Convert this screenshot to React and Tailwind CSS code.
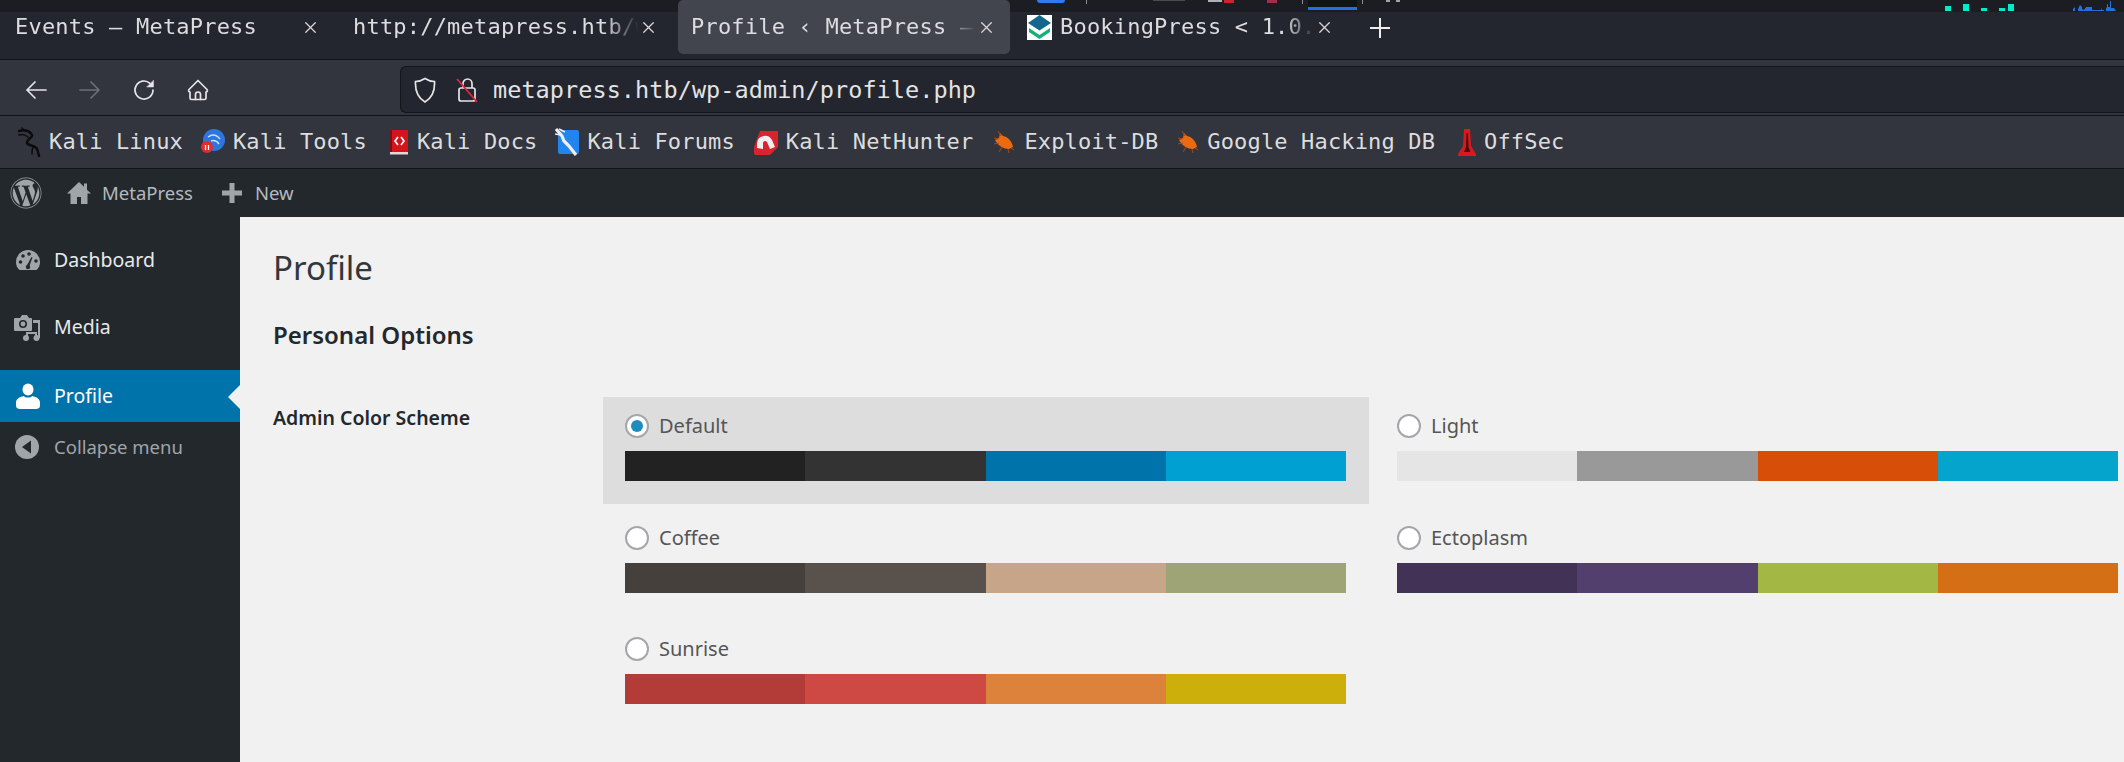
import React from "react";
import { X } from "lucide-react";
import { FaWordpress } from "react-icons/fa";

const mono = "font-['DejaVu_Sans_Mono',monospace]";
const sans = "font-['Noto_Sans',sans-serif]";

function TopStrip() {
  return (
    <svg className="absolute left-0 top-0" width="2124" height="12" viewBox="0 0 2124 12">
      <rect width="2124" height="12" fill="#1b1d23" />
      <rect x="1037" y="-3" width="28" height="6" rx="3" fill="#2f7bf0" />
      <rect x="1086" y="0" width="1" height="4" fill="#8a8c90" />
      <rect x="1153" y="0" width="32" height="1" fill="#4a4c50" />
      <rect x="1208" y="0" width="14" height="2" fill="#b0b0b4" />
      <rect x="1224" y="0" width="10" height="3" fill="#d02028" />
      <rect x="1267" y="0" width="10" height="3" fill="#a0304c" />
      <rect x="1302" y="0" width="1" height="4" fill="#8a8c90" />
      <rect x="1308" y="0" width="49" height="7" fill="#121317" />
      <rect x="1308" y="7" width="49" height="3" fill="#2470e0" />
      <rect x="1362" y="0" width="1" height="4" fill="#8a8c90" />
      <rect x="1386" y="0" width="4" height="2" fill="#a0a2a6" />
      <rect x="1396" y="0" width="4" height="2" fill="#a0a2a6" />
      <g fill="#06e8d0">
        <rect x="1945" y="6" width="6" height="5" />
        <rect x="1963" y="4" width="6" height="7" />
        <rect x="1981" y="8" width="6" height="3" />
        <rect x="1999" y="8" width="6" height="3" />
        <rect x="2008" y="4" width="6" height="7" />
      </g>
      <path d="M2073 11v-2l2-2v4h3V9l2-4 2 2v2l2 1 2-3h6v3h9v-2l1 2h2v1h2V8l1-1v-3h1v3h2V1h1v7h3l2 3z" fill="#2470e0" />
    </svg>
  );
}

function Tab({ active, icon, children }) {
  return (
    <div className={`flex h-[54px] w-[332px] shrink-0 items-center rounded-[5px] pr-[14px] ${icon ? "pl-[11px]" : "pl-[13px]"} ${active ? "bg-[#42454d]" : ""}`}>
      {icon}
      <span className={`min-w-0 flex-1 overflow-hidden whitespace-nowrap ${mono} text-[22px] leading-[28px] tracking-[0.2px] text-[#dcdddf] [mask-image:linear-gradient(to_right,#000_88%,transparent_100%)]`}>
        {children}
      </span>
      <X size={19} strokeWidth={1.5} className="shrink-0 text-[#d8d9db]" />
    </div>
  );
}

function BookingIcon() {
  return (
    <svg width="25" height="25" viewBox="0 0 25 25" className="mr-[8px] shrink-0">
      <rect width="25" height="25" fill="#fff" />
      <path d="M12.5 0L24 8 12.5 15.5 1 8z" fill="#14668c" />
      <path d="M2 13l10.5 7 10.5-7v4L12.5 24 2 17z" fill="#14b07c" />
    </svg>
  );
}

function NavIcon({ children, dim }) {
  return (
    <svg width="24" height="24" viewBox="0 0 24 24" fill="none" stroke={dim ? "#6d6f75" : "#e4e5e7"} strokeWidth="1.7" strokeLinecap="round" strokeLinejoin="round" className="shrink-0">
      {children}
    </svg>
  );
}

function KaliIcon() {
  return (
    <svg width="24" height="30" viewBox="0 0 24 30" fill="none" stroke="#0b0b0d" strokeWidth="2.4" strokeLinecap="round" className="shrink-0">
      <path d="M1 4c6-2 11 0 13 4 1 3-6 4-5 8 1 3 8 2 10 6 1 2 1 4 2 7" />
      <path d="M4 1l3 3M1 8c3-1 7 0 9 2M15 20c-1 2-1 4-1 7" strokeWidth="1.500" />
    </svg>
  );
}
function ToolsIcon() {
  return (
    <svg width="24" height="26" viewBox="0 0 24 26" className="shrink-0">
      <circle cx="13" cy="11" r="11" fill="#2c76de" />
      <path d="M7 8c4-3 8-3 12 2M10 12c3-1 6 0 8 3" stroke="#cfe2fb" strokeWidth="1.4" fill="none" />
      <circle cx="6" cy="18" r="6" fill="#e22b2b" />
      <path d="M4.5 16v5M7.5 16v5" stroke="#fff" strokeWidth="1.3" />
    </svg>
  );
}
function DocsIcon() {
  return (
    <svg width="19" height="26" viewBox="0 0 19 26" className="shrink-0">
      <rect x="0" y="1" width="18" height="22" fill="#d3141b" />
      <rect x="0" y="1" width="2" height="22" fill="#7e0d14" />
      <rect x="0" y="23" width="18" height="2.5" fill="#e9d6d6" />
      <path d="M8 8l-3 4 3 4M11 8l3 4-3 4" stroke="#fff" strokeWidth="1.7" fill="none" />
    </svg>
  );
}
function ForumsIcon() {
  return (
    <svg width="24" height="28" viewBox="0 0 24 28" className="shrink-0">
      <path d="M6 2h16a2 2 0 0 1 2 2v20a2 2 0 0 1-2 2H5a2 2 0 0 1-2-2V8z" fill="#2384ee" />
      <path d="M1 1l6 7 2 5 5 5 7 9" stroke="#eeeff2" strokeWidth="3.200" fill="none" />
      <path d="M4 1l6 3M0 6l6 1" stroke="#eeeff2" strokeWidth="1.600" />
    </svg>
  );
}
function HunterIcon() {
  return (
    <svg width="24" height="26" viewBox="0 0 24 26" className="shrink-0">
      <path d="M6 2h18v16L16 26H2a2 2 0 0 1-2-2v-6z" fill="#d8242e" />
      <path d="M3 19V14a8 8 0 0 1 15-3l3 7-5 2-3-7c-1-2-4-1-4 1v6z" fill="#f0eeee" />
    </svg>
  );
}
function BugIcon() {
  return (
    <svg width="23" height="24" viewBox="0 0 23 24" className="shrink-0">
      <path d="M7 3l3 3c5 1 9 5 10 11l-4 2c-5 0-11-3-14-9l4-2z" fill="#ec6a10" />
      <path d="M5 1l3 5M1 8l4 1M1 14l5-1M6 22l3-5M16 23l-1-4M21 20l-3-2" stroke="#a8480f" strokeWidth="1" />
    </svg>
  );
}
function OffSecIcon() {
  return (
    <svg width="20" height="28" viewBox="0 0 20 28" className="shrink-0">
      <path d="M7 1h6l1 17 5 8v2H1v-2l5-8z" fill="#d81a20" />
      <path d="M9.5 5h1.5l.5 14 2 5H7l2-5z" fill="#4a0a0c" />
    </svg>
  );
}

const bookmarks = [
  ["Kali Linux", <KaliIcon />, "mr-[7px]", "mr-[18px]"],
  ["Kali Tools", <ToolsIcon />, "mr-[8px]", "mr-[23px]"],
  ["Kali Docs", <DocsIcon />, "mr-[8px]", "mr-[18px]"],
  ["Kali Forums", <ForumsIcon />, "mr-[8px]", "mr-[19px]"],
  ["Kali NetHunter", <HunterIcon />, "mr-[8px]", "mr-[20px]"],
  ["Exploit-DB", <BugIcon />, "mr-[8px]", "mr-[19px]"],
  ["Google Hacking DB", <BugIcon />, "mr-[7px]", "mr-[22px]"],
  ["OffSec", <OffSecIcon />, "mr-[7px]", ""],
];

function DashIcon() {
  return (
    <svg width="26" height="24" viewBox="0 0 26 24" className="shrink-0">
      <path d="M4.5 22C2 20 1 17 1 14a12 12 0 0 1 24 0c0 3-1 6-3.500 8z" fill="#a0a5aa" />
      <g fill="#23282d">
        <circle cx="5.500" cy="14" r="1.800" />
        <circle cx="8" cy="8" r="1.800" />
        <circle cx="14" cy="6" r="1.800" />
        <circle cx="21" cy="13" r="1.800" />
        <path d="M11.500 18l5-9 1 .5-3.500 9.500z" />
        <circle cx="13" cy="19" r="2.200" />
      </g>
    </svg>
  );
}
function MediaIcon() {
  return (
    <svg width="28" height="28" viewBox="0 0 28 28" className="shrink-0">
      <path d="M2 5h5l2-3h5l2 3h2a1 1 0 0 1 1 1v11a1 1 0 0 1-1 1H2a1 1 0 0 1-1-1V6a1 1 0 0 1 1-1z" fill="#a0a5aa" />
      <circle cx="10" cy="11" r="4" fill="#23282d" />
      <circle cx="10" cy="11" r="2.400" fill="#a0a5aa" />
      <path d="M20 7h7v18h-2V10h-5z" fill="#a0a5aa" />
      <circle cx="13" cy="25" r="3" fill="#a0a5aa" />
      <circle cx="23.500" cy="25" r="3" fill="#a0a5aa" />
      <path d="M14 25v-5h9v5" fill="none" stroke="#a0a5aa" strokeWidth="2" />
    </svg>
  );
}
function UserIcon() {
  return (
    <svg width="24" height="26" viewBox="0 0 24 26" className="shrink-0">
      <ellipse cx="12" cy="6.500" rx="5.500" ry="6" fill="#fff" />
      <path d="M0 20c0-4 3-6 8-7 1 2 7 2 8 0 5 1 8 3 8 7v3c0 2-2 3-4 3H4c-2 0-4-1-4-3z" fill="#fff" />
    </svg>
  );
}
function CollapseIcon() {
  return (
    <svg width="24" height="24" viewBox="0 0 24 24" className="shrink-0">
      <circle cx="12" cy="12" r="12" fill="#a0a5aa" />
      <path d="M7 12l9-6.500v13z" fill="#23282d" />
    </svg>
  );
}

function Radio({ checked }) {
  return (
    <span className="flex h-[24px] w-[24px] shrink-0 items-center justify-center rounded-full border-[2px] border-[#a3a7ab] bg-white">
      {checked && <span className="h-[12px] w-[12px] rounded-full bg-[#1e8cbe]" />}
    </span>
  );
}

const schemes = [
  ["Default", ["bg-[#222222]", "bg-[#333333]", "bg-[#0073aa]", "bg-[#00a0d2]"], true],
  ["Light", ["bg-[#e5e5e5]", "bg-[#999999]", "bg-[#d64e07]", "bg-[#04a4cc]"]],
  ["Coffee", ["bg-[#46403c]", "bg-[#59524c]", "bg-[#c7a589]", "bg-[#9ea476]"]],
  ["Ectoplasm", ["bg-[#413256]", "bg-[#523f6d]", "bg-[#a3b745]", "bg-[#d46f15]"]],
  ["Sunrise", ["bg-[#b43c38]", "bg-[#cf4944]", "bg-[#dd823b]", "bg-[#ccaf0b]"]],
];

function Scheme({ name, colors, selected }) {
  return (
    <div className={`h-[107px] w-[766px] pl-[22px] pr-[23px] pt-[17px] ${selected ? "bg-[#dddddd]" : ""}`}>
      <div className="flex h-[24px] items-center gap-[10px]">
        <Radio checked={selected} />
        <span className="text-[20px] leading-[24px] text-[#555555]">{name}</span>
      </div>
      <div className="mt-[13px] grid h-[30px] grid-cols-4">
        {colors.map((c) => (
          <div key={c} className={c} />
        ))}
      </div>
    </div>
  );
}

export default function App() {
  return (
    <div className="flex h-[762px] w-[2124px] flex-col overflow-hidden bg-[#f1f1f1]">
      {/* Tabs */}
      <div className="relative h-[59px] shrink-0 bg-[#23262e]">
        <TopStrip />
        <div className="relative flex items-start gap-[6px] pl-[2px]">
          <Tab>Events — MetaPress</Tab>
          <Tab>http://metapress.htb/wp-login.php</Tab>
          <Tab active>Profile ‹ MetaPress — WordPress</Tab>
          <Tab icon={<BookingIcon />}>BookingPress &lt; 1.0.11 - Unauth</Tab>
          <svg width="20" height="20" viewBox="0 0 20 20" stroke="#eceded" strokeWidth="2" className="ml-[16px] mt-[18px] shrink-0">
            <path d="M10 0v20M0 10h20" />
          </svg>
        </div>
      </div>
      <div className="h-[1px] shrink-0 bg-[#121317]" />

      {/* Toolbar */}
      <div className="flex h-[55px] shrink-0 items-start bg-[#32353d] pt-[6px]">
        <div className="flex h-[47px] w-[400px] shrink-0 items-center gap-[30px] pl-[24px]">
          <NavIcon><path d="M22 12H3M11 4l-8 8 8 8" /></NavIcon>
          <NavIcon dim><path d="M2 12h19M13 4l8 8-8 8" /></NavIcon>
          <NavIcon>
            <path d="M21 12a9 9 0 1 1-3-6.700" />
            <path d="M21.500 2.500v6.500h-6.500z" fill="#e4e5e7" strokeWidth="0.500" />
          </NavIcon>
          <NavIcon>
            <path d="M3 11.500L12 2.500l9 9a1.500 1.500 0 0 1-1 2.500v6a1.500 1.500 0 0 1-1.500 1.500h-13A1.500 1.500 0 0 1 4 20v-6a1.500 1.500 0 0 1-1-2.500z" />
            <path d="M9.500 21.500v-5a2.500 2.500 0 0 1 5 0v5" />
          </NavIcon>
        </div>
        <div className="flex h-[47px] min-w-0 flex-1 items-center rounded-l-[6px] border border-r-0 border-[#14151a] bg-[#23262e] pl-[13px]">
          <svg width="22" height="26" viewBox="0 0 22 26" fill="none" stroke="#e4e5e7" strokeWidth="1.700" className="shrink-0">
            <path d="M11 1.500c3 2 6 3 9.500 3 .5 9-1.500 16-9.500 20.500C3 20.500 1 13.500 1.500 4.500c3.500 0 6.500-1 9.500-3z" />
          </svg>
          <svg width="22" height="28" viewBox="0 0 22 28" fill="none" className="ml-[20px] shrink-0">
            <path d="M7 12V7.500a4.500 4.500 0 0 1 9 0V12" stroke="#e4e5e7" strokeWidth="1.700" />
            <rect x="3" y="12" width="16" height="13" rx="2" stroke="#e4e5e7" strokeWidth="1.700" />
            <path d="M1 3l20 23" stroke="#e2243f" strokeWidth="1.800" />
          </svg>
          <span className={`ml-[15px] whitespace-nowrap ${mono} text-[23.5px] leading-[30px] tracking-[0.06px] text-[#e2e3e5]`}>metapress.htb/wp-admin/profile.php</span>
        </div>
      </div>
      <div className="h-[1px] shrink-0 bg-[#121317]" />

      {/* Bookmarks */}
      <div className="flex h-[52px] shrink-0 items-center bg-[#32353d] pl-[18px]">
        {bookmarks.map(([label, icon, gap, after]) => (
          <div key={label} className={`flex items-center ${after}`}>
            <span className={`flex ${gap}`}>{icon}</span>
            <span className={`whitespace-nowrap ${mono} text-[22px] leading-[28px] tracking-[0.15px] text-[#dcdddf]`}>{label}</span>
          </div>
        ))}
      </div>
      <div className="h-[1px] shrink-0 bg-[#121317]" />

      {/* WP admin bar */}
      <div className={`flex h-[48px] shrink-0 items-center bg-[#23282d] ${sans} text-[18.5px] text-[#b4b9be]`}>
        <FaWordpress size={32} className="ml-[10px] shrink-0 text-[#a0a5aa]" />
        <svg width="24" height="24" viewBox="0 0 24 24" fill="#a0a5aa" className="ml-[25px] shrink-0">
          <path d="M12 1L0 12.500h3.500V23H10v-7h4v7h6.500V12.500H24l-4-3.800V2.500h-3v3.300z" />
        </svg>
        <span className="ml-[11px]">MetaPress</span>
        <svg width="20" height="20" viewBox="0 0 20 20" fill="#a0a5aa" className="ml-[29px] shrink-0">
          <path d="M7.500 0h5v7.500H20v5h-7.500V20h-5v-7.500H0v-5h7.500z" />
        </svg>
        <span className="ml-[13px]">New</span>
      </div>

      {/* Body */}
      <div className={`flex min-h-0 flex-1 ${sans}`}>
        <div className="flex w-[240px] shrink-0 flex-col bg-[#23282d] pt-[17px] text-[19.5px] text-[#e8e9ea]">
          <div className="mb-[15px] flex h-[52px] items-center pl-[15px]">
            <span className="flex w-[39px] shrink-0"><DashIcon /></span>Dashboard
          </div>
          <div className="mb-[17px] flex h-[52px] items-center pl-[13px]">
            <span className="flex w-[41px] shrink-0"><MediaIcon /></span>Media
          </div>
          <div className="relative flex h-[52px] items-center bg-[#0073aa] pl-[16px] text-white">
            <span className="flex w-[38px] shrink-0"><UserIcon /></span>Profile
            <span className="absolute right-0 top-[15px] h-0 w-0 border-y-[12px] border-r-[12px] border-y-transparent border-r-[#f1f1f1]" />
          </div>
          <div className="flex h-[50px] items-center pl-[15px] text-[18.5px] text-[#a0a5aa]">
            <span className="flex w-[39px] shrink-0"><CollapseIcon /></span>Collapse menu
          </div>
        </div>

        <div className="min-w-0 flex-1 overflow-hidden pl-[33px]">
          <h1 className="mt-[27px] text-[33px] leading-[48px] text-[#32373c]">Profile</h1>
          <h2 className="mt-[27px] text-[24px] font-semibold leading-[32px] text-[#23282d]">Personal Options</h2>
          <div className="mt-[46px] flex items-start">
            <div className="w-[330px] shrink-0 pt-[8px] text-[19.5px] font-semibold leading-[26px] text-[#23282d]">Admin Color Scheme</div>
            <div className="grid w-[1538px] shrink-0 grid-cols-[766px_766px] gap-x-[6px] gap-y-[4.500px]">
              {schemes.map(([name, colors, selected]) => (
                <Scheme key={name} name={name} colors={colors} selected={selected} />
              ))}
            </div>
          </div>
        </div>
      </div>
    </div>
  );
}
